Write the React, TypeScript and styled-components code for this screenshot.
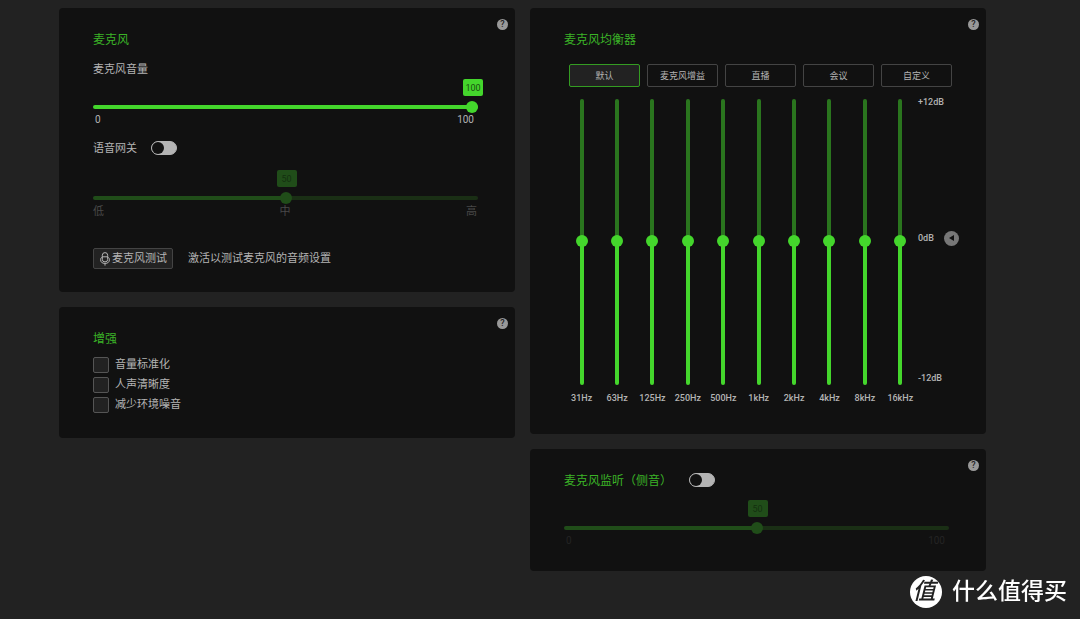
import React, { useState } from "react";
import styled, { createGlobalStyle, css } from "styled-components";

const GlobalStyle = createGlobalStyle`
  *, *::before, *::after { box-sizing: border-box; }
  body {
    margin: 0;
    background: #222;
    color: #b4b4b4;
    font-family: Roboto, "Noto Sans CJK SC", sans-serif;
    font-size: 11px;
    line-height: 14px;
  }
  button, input { font: inherit; color: inherit; margin: 0; }
`;

const Page = styled.main`
  display: grid;
  grid-template-columns: 1fr 1fr;
  gap: 15px;
  align-items: start;
  padding: 8px 94px 40px 59px;
`;

const Column = styled.div`
  display: flex;
  flex-direction: column;
  gap: 15px;
  min-width: 0;
`;

const Panel = styled.section<{ $bottom?: number }>`
  position: relative;
  padding: 24px 34px ${(p) => p.$bottom ?? 23}px;
  background: #111;
  border-radius: 4px;
`;

const Title = styled.h2`
  margin: 0;
  font-size: 12px;
  font-weight: 400;
  line-height: 16px;
  color: #3bb327;
`;

const Help = styled.button`
  position: absolute;
  top: 11px;
  right: 7px;
  width: 11px;
  height: 11px;
  padding: 0;
  border: 0;
  border-radius: 50%;
  background: #999;
  color: #222;
  font-size: 9px;
  font-weight: 500;
  line-height: 11px;
  text-align: center;
`;

const FieldLabel = styled.label`
  display: block;
  margin-top: 15px;
`;

const SwitchRow = styled.div<{ $top?: number; $gap: number }>`
  display: flex;
  gap: ${(p) => p.$gap}px;
  margin-top: ${(p) => p.$top ?? 0}px;
  line-height: 16px;
`;

const Switch = styled.input.attrs({ type: "checkbox", role: "switch" })`
  appearance: none;
  display: flex;
  width: 26px;
  height: 14px;
  border: 1px solid #b4b4b4;
  border-radius: 7px;
  background: #b4b4b4;

  &::before {
    content: "";
    width: 12px;
    height: 12px;
    border-radius: 50%;
    background: #111;
  }
  &:checked {
    justify-content: flex-end;
    background: #44d62c;
    border-color: #44d62c;
  }
`;

const SliderBox = styled.div<{ $top: number }>`
  margin: ${(p) => p.$top}px 3px 0 0;
`;

const SliderTrack = styled.div`
  position: relative;
  display: flex;
  height: 12px;
`;

const thumb = css`
  appearance: none;
  width: 12px;
  height: 12px;
  border: 0;
  border-radius: 50%;
`;

const Range = styled.input.attrs({ type: "range" })`
  appearance: none;
  width: 100%;
  height: 12px;
  background: transparent;

  &::-webkit-slider-runnable-track {
    height: 4px;
    border-radius: 2px;
    background: linear-gradient(to right, #44d62c var(--fill), #1a3015 var(--fill));
  }
  &::-webkit-slider-thumb {
    ${thumb}
    margin-top: -4px;
    background: #44d62c;
  }
  &:disabled::-webkit-slider-runnable-track {
    background: linear-gradient(to right, #204d19 var(--fill), #1a2f15 var(--fill));
  }
  &:disabled::-webkit-slider-thumb {
    background: #204d19;
  }
`;

const Bubble = styled.output<{ $off?: boolean }>`
  position: absolute;
  bottom: 17px;
  width: 20px;
  height: 17px;
  border-radius: 2px;
  background: ${(p) => (p.$off ? "#204d19" : "#44d62c")};
  color: ${(p) => (p.$off ? "#143010" : "#185010")};
  font-size: 9px;
  line-height: 18px;
  text-align: center;
`;

const Ends = styled.div<{ $tone: string; $numeric?: boolean }>`
  display: flex;
  justify-content: space-between;
  padding: ${(p) => (p.$numeric ? "0 4px 0 2px" : "0 1px 0 0")};
  color: ${(p) => p.$tone};
  font-size: ${(p) => (p.$numeric ? 10 : 11)}px;
  line-height: ${(p) => (p.$numeric ? 14 : 16)}px;
`;

type SliderProps = {
  id: string;
  initial: number;
  ends: string[];
  top: number;
  tone: string;
  numeric?: boolean;
  disabled?: boolean;
  label?: string;
};

function Slider({ id, initial, ends, top, tone, numeric, disabled, label }: SliderProps) {
  const [value, setValue] = useState(initial);
  return (
    <SliderBox $top={top}>
      <SliderTrack>
        <Range
          id={id}
          aria-label={label}
          min={0}
          max={100}
          value={value}
          disabled={disabled}
          onChange={(e) => setValue(Number(e.target.value))}
          style={{ "--fill": `${value}%` } as React.CSSProperties}
        />
        <Bubble
          htmlFor={id}
          $off={disabled}
          style={{ left: `calc((100% - 12px) * ${value / 100} - 3px)` }}
        >
          {value}
        </Bubble>
      </SliderTrack>
      <Ends $tone={tone} $numeric={numeric}>
        {ends.map((t) => (
          <span key={t}>{t}</span>
        ))}
      </Ends>
    </SliderBox>
  );
}

const TestRow = styled.div`
  display: flex;
  align-items: center;
  gap: 15px;
  margin-top: 28px;
`;

const TestButton = styled.button`
  display: flex;
  align-items: center;
  gap: 2px;
  height: 21px;
  padding: 0 5px 0 6px;
  border: 1px solid #444;
  border-radius: 2px;
  background: #222;
  white-space: nowrap;
`;

const CheckList = styled.div`
  display: flex;
  flex-direction: column;
  gap: 4px;
  margin-top: 10px;
`;

const CheckLabel = styled.label`
  display: flex;
  align-items: center;
  gap: 6px;
  height: 16px;
`;

const CheckBox = styled.input.attrs({ type: "checkbox" })`
  appearance: none;
  width: 16px;
  height: 16px;
  border: 1px solid #555;
  border-radius: 2px;
  background: #222;

  &:checked {
    background: #44d62c;
  }
`;

const Presets = styled.div`
  display: grid;
  grid-template-columns: repeat(5, 1fr);
  gap: 7px;
  margin: 16px 0 12px 5px;
`;

const Preset = styled.button<{ $active?: boolean }>`
  height: 23px;
  padding: 0;
  border: 1px solid ${(p) => (p.$active ? "#349c22" : "#444")};
  border-radius: 2px;
  background: ${(p) => (p.$active ? "#222" : "#111")};
  font-size: 9px;
  white-space: nowrap;
`;

const Equalizer = styled.div`
  display: flex;
  align-items: flex-start;
  font-size: 9px;
  font-weight: 500;
`;

const Bands = styled.div`
  display: grid;
  grid-template-columns: repeat(10, minmax(0, 1fr));
  flex: 1;
`;

const Band = styled.label`
  display: flex;
  flex-direction: column;
  align-items: center;
  gap: 6px;
`;

const BandRange = styled.input.attrs({ type: "range" })`
  appearance: none;
  writing-mode: vertical-lr;
  direction: rtl;
  width: 12px;
  height: 286px;
  background: transparent;

  &::-webkit-slider-runnable-track {
    width: 4px;
    border-radius: 2px;
    background: linear-gradient(to top, #44d62c var(--fill), #2a751e var(--fill));
  }
  &::-webkit-slider-thumb {
    ${thumb}
    margin-left: -4px;
    background: #44d62c;
  }
`;

const Scale = styled.div`
  display: flex;
  flex-direction: column;
  justify-content: space-between;
  width: 34px;
  height: 290px;
  margin-top: -4px;
  white-space: nowrap;
`;

const ScaleZero = styled.div`
  display: flex;
  align-items: center;
  gap: 10px;
  height: 20px;
  padding-bottom: 4px;
`;

const Collapse = styled.button`
  display: flex;
  flex: none;
  align-items: center;
  justify-content: center;
  width: 15px;
  height: 15px;
  padding: 0;
  border: 0;
  border-radius: 50%;
  background: #777;
`;

const Brand = styled.div`
  position: fixed;
  right: 13px;
  bottom: 11px;
  display: flex;
  align-items: center;
  gap: 10px;
  color: #fff;
  font-size: 23px;
  font-weight: 500;
  line-height: 32px;
  white-space: nowrap;
`;

const BrandMark = styled.span`
  width: 32px;
  height: 32px;
  padding-right: 4px;
  border-radius: 50%;
  background: #fff;
  color: #222;
  font-style: italic;
  text-align: center;
`;

const presets = ["默认", "麦克风增益", "直播", "会议", "自定义"];
const bands = ["31Hz", "63Hz", "125Hz", "250Hz", "500Hz", "1kHz", "2kHz", "4kHz", "8kHz", "16kHz"];
const enhancements = ["音量标准化", "人声清晰度", "减少环境噪音"];

function BandSlider({ name }: { name: string }) {
  const [gain, setGain] = useState(0.1);
  return (
    <Band>
      <BandRange
        min={-12}
        max={12}
        step={0.1}
        value={gain}
        onChange={(e) => setGain(Number(e.target.value))}
        style={{ "--fill": `${((gain + 12) / 24) * 100}%` } as React.CSSProperties}
      />
      {name}
    </Band>
  );
}

function MicIcon() {
  return (
    <svg width="10" height="14" viewBox="0 0 10 14" fill="none" stroke="#b4b4b4" aria-hidden="true">
      <path d="M2.3 7.5V3.3a2.7 2.7 0 0 1 5.4 0v4.2a2.7 2.4 0 0 1-5.4 0zM2.3 4.8h5.4" />
      <path d="M2.3 5.2C1 5.6.6 6.600.6 7.600a4.400 3.800 0 0 0 8.800 0C9.400 6.600 9 5.600 7.700 5.200M5 11.400v2.200" />
    </svg>
  );
}

export default function App() {
  const [preset, setPreset] = useState(presets[0]);
  return (
    <>
      <GlobalStyle />
      <Page>
        <Column>
          <Panel>
            <Help aria-label="帮助">?</Help>
            <Title>麦克风</Title>
            <FieldLabel htmlFor="volume">麦克风音量</FieldLabel>
            <Slider id="volume" initial={100} ends={["0", "100"]} top={24} tone="#b4b4b4" numeric />
            <SwitchRow $top={14} $gap={14}>
              <label htmlFor="gate">语音网关</label>
              <Switch id="gate" />
            </SwitchRow>
            <Slider
              id="gate-level"
              label="语音网关"
              initial={50}
              ends={["低", "中", "高"]}
              top={35}
              tone="#484848"
              disabled
            />
            <TestRow>
              <TestButton>
                <MicIcon />
                麦克风测试
              </TestButton>
              <span>激活以测试麦克风的音频设置</span>
            </TestRow>
          </Panel>
          <Panel $bottom={25}>
            <Help aria-label="帮助">?</Help>
            <Title>增强</Title>
            <CheckList>
              {enhancements.map((name) => (
                <CheckLabel key={name}>
                  <CheckBox />
                  {name}
                </CheckLabel>
              ))}
            </CheckList>
          </Panel>
        </Column>
        <Column>
          <Panel $bottom={29}>
            <Help aria-label="帮助">?</Help>
            <Title>麦克风均衡器</Title>
            <Presets>
              {presets.map((name) => (
                <Preset key={name} $active={name === preset} onClick={() => setPreset(name)}>
                  {name}
                </Preset>
              ))}
            </Presets>
            <Equalizer>
              <Bands>
                {bands.map((name) => (
                  <BandSlider key={name} name={name} />
                ))}
              </Bands>
              <Scale>
                <span>+12dB</span>
                <ScaleZero>
                  0dB
                  <Collapse aria-label="收起">
                    <svg width="5" height="6" viewBox="0 0 5 6" aria-hidden="true">
                      <path d="M0 3L5 0v6z" fill="#111" />
                    </svg>
                  </Collapse>
                </ScaleZero>
                <span>-12dB</span>
              </Scale>
            </Equalizer>
          </Panel>
          <Panel>
            <Help aria-label="帮助">?</Help>
            <SwitchRow $gap={17}>
              <Title as="label" htmlFor="monitor">
                麦克风监听（侧音）
              </Title>
              <Switch id="monitor" />
            </SwitchRow>
            <Slider
              id="monitor-level"
              label="麦克风监听"
              initial={50}
              ends={["0", "100"]}
              top={33}
              tone="#242424"
              numeric
              disabled
            />
          </Panel>
        </Column>
      </Page>
      <Brand>
        <BrandMark>值</BrandMark>
        <span>什么值得买</span>
      </Brand>
    </>
  );
}
